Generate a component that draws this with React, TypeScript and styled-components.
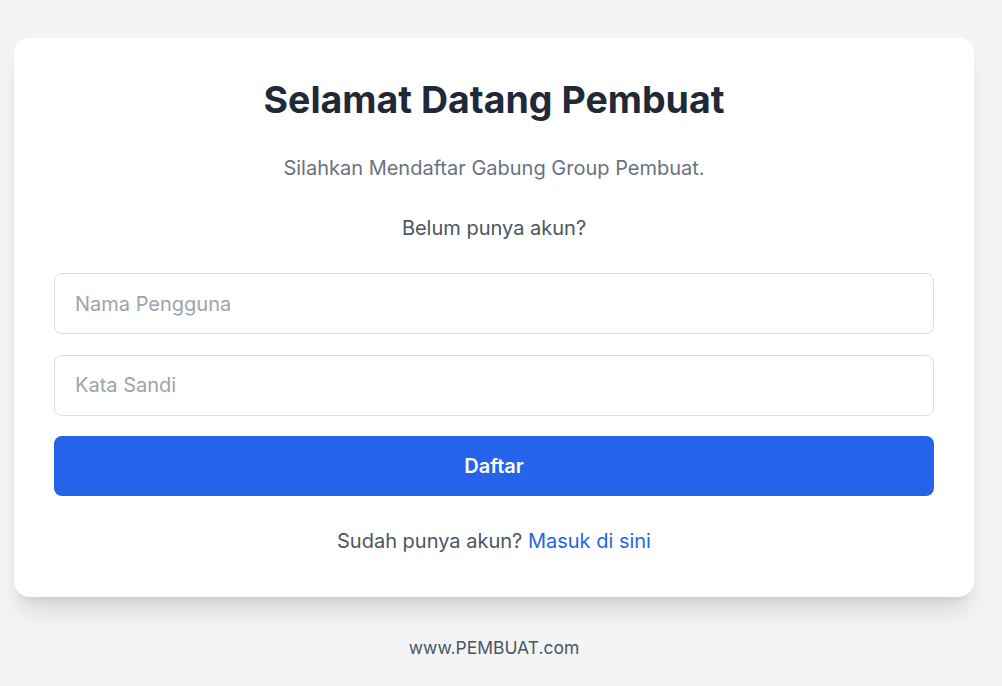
import styled, { createGlobalStyle } from "styled-components"

const Global = createGlobalStyle`
body {
  margin: 0;
  background: #f3f4f6;
  font-family: Inter, "Noto Sans", Arial, sans-serif;
}
`;

const App = () => {
    return (
        <Page>
            <Global />
            <Card>
                <Title>Selamat Datang Pembuat</Title>
                <Subtitle>Silahkan Mendaftar Gabung Group Pembuat.</Subtitle>
                <Prompt>Belum punya akun?</Prompt>
                <Form onSubmit={(e) => e.preventDefault()}>
                    <Input type="text" placeholder="Nama Pengguna" />
                    <Input type="password" placeholder="Kata Sandi" />
                    <Button type="submit">Daftar</Button>
                </Form>
                <Bottom>
                    Sudah punya akun? <Link href="#">Masuk di sini</Link>
                </Bottom>
            </Card>
            <Footer>www.PEMBUAT.com</Footer>
        </Page>
    )
}

export default App

const Footer = styled.div`
text-align: center;
font-size: 17.5px;
line-height: 24px;
color: #4b5563;
margin-top: 39px;
width: 960px;
`;
const Link = styled.a`
color: #2563eb;
text-decoration: none;
`;
const Bottom = styled.p`
margin: 31px 0 0;
text-align: center;
font-size: 20px;
line-height: 28px;
color: #4b5563;
`;
const Button = styled.button`
height: 60px;
border: none;
border-radius: 8px;
background: #2563eb;
color: #fff;
font-family: inherit;
font-size: 20px;
font-weight: 600;
cursor: pointer;
`;
const Input = styled.input`
height: 61px;
box-sizing: border-box;
border: 1px solid #d9dce1;
border-radius: 8px;
padding: 0 20px;
font-family: inherit;
font-size: 20px;
color: #111827;
outline: none;
&::placeholder {
  color: #9ca3af;
}
`;
const Form = styled.form`
display: flex;
flex-direction: column;
gap: 20.5px;
margin-top: 31px;
`;
const Prompt = styled.p`
margin: 32px 0 0;
text-align: center;
font-size: 20px;
line-height: 28px;
color: #4b5563;
`;
const Subtitle = styled.p`
margin: 34px 0 0;
text-align: center;
font-size: 20px;
line-height: 28px;
color: #6b7280;
`;
const Title = styled.h1`
margin: 0;
text-align: center;
font-size: 37.5px;
line-height: 40px;
font-weight: 700;
color: #1f2937;
`;
const Card = styled.div`
width: 960px;
box-sizing: border-box;
background: #fff;
border-radius: 16px;
padding: 42px 40px 42px;
box-shadow: 0 20px 25px -5px rgba(0, 0, 0, 0.1), 0 8px 10px -6px rgba(0, 0, 0, 0.1);
`;
const Page = styled.div`
min-height: 100vh;
padding: 38px 0 0 14px;
box-sizing: border-box;
`;
